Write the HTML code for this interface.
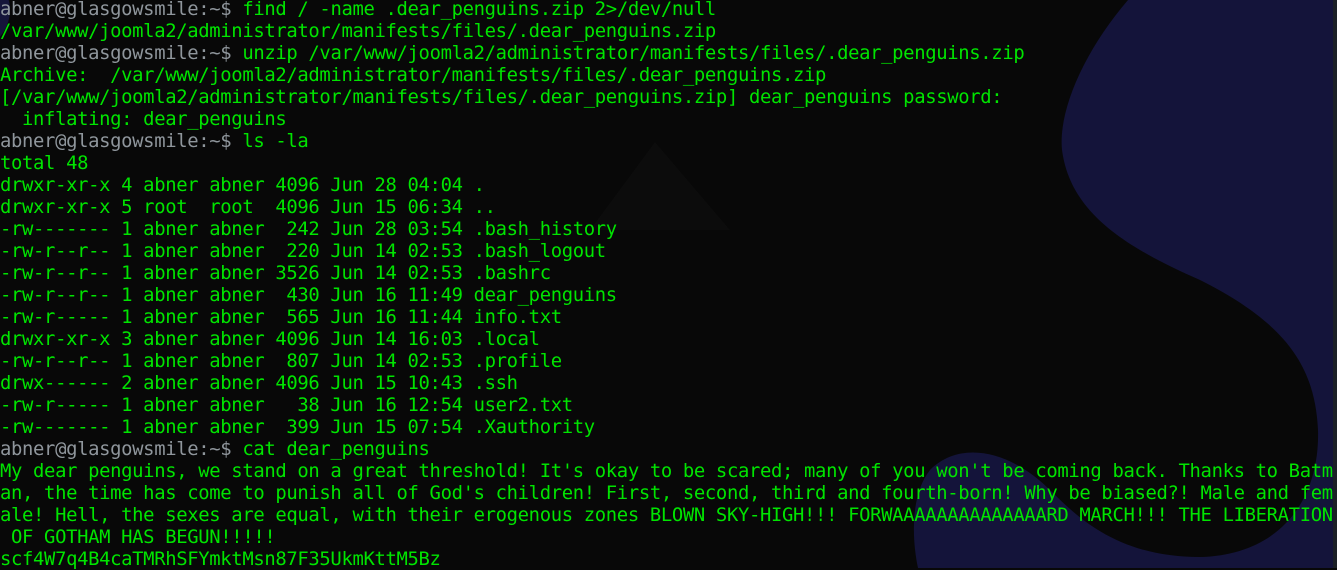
<!DOCTYPE html>
<html><head><meta charset="utf-8"><style>
html,body{margin:0;padding:0;width:1337px;height:568px;overflow:hidden;background:#080808}
svg{position:absolute;left:0;top:0}
pre{position:absolute;left:0;top:-2px;margin:0;font-family:"DejaVu Sans Mono","Liberation Mono",monospace;font-size:18.88px;line-height:22px;color:#00e400;white-space:pre;letter-spacing:-0.34px}
.p{color:#8f969c}
</style></head><body>
<svg width="1337" height="568">
<circle cx="-30" cy="10" r="40" fill="#15153a"/>
<path d="M1128,0 C1085,50 1058,110 1062,150 C1070,210 1120,245 1200,280 C1290,325 1315,370 1318,430 C1320,500 1280,555 1200,557 C1120,557 1080,520 1050,490 C1010,450 960,440 930,470 C910,495 912,540 918,568 L1333,568 L1333,0 Z" fill="#14143a"/>
<polygon points="590,230 655,142 730,230" fill="#0c0c0c"/>
<rect x="1333" y="0" width="4" height="568" fill="#1b2026"/>
</svg>
<pre><span class="p">abner@glasgowsmile:~$</span> find / -name .dear_penguins.zip 2&gt;/dev/null
/var/www/joomla2/administrator/manifests/files/.dear_penguins.zip
<span class="p">abner@glasgowsmile:~$</span> unzip /var/www/joomla2/administrator/manifests/files/.dear_penguins.zip
Archive:  /var/www/joomla2/administrator/manifests/files/.dear_penguins.zip
[/var/www/joomla2/administrator/manifests/files/.dear_penguins.zip] dear_penguins password: 
  inflating: dear_penguins           
<span class="p">abner@glasgowsmile:~$</span> ls -la
total 48
drwxr-xr-x 4 abner abner 4096 Jun 28 04:04 .
drwxr-xr-x 5 root  root  4096 Jun 15 06:34 ..
-rw------- 1 abner abner  242 Jun 28 03:54 .bash_history
-rw-r--r-- 1 abner abner  220 Jun 14 02:53 .bash_logout
-rw-r--r-- 1 abner abner 3526 Jun 14 02:53 .bashrc
-rw-r--r-- 1 abner abner  430 Jun 16 11:49 dear_penguins
-rw-r----- 1 abner abner  565 Jun 16 11:44 info.txt
drwxr-xr-x 3 abner abner 4096 Jun 14 16:03 .local
-rw-r--r-- 1 abner abner  807 Jun 14 02:53 .profile
drwx------ 2 abner abner 4096 Jun 15 10:43 .ssh
-rw-r----- 1 abner abner   38 Jun 16 12:54 user2.txt
-rw------- 1 abner abner  399 Jun 15 07:54 .Xauthority
<span class="p">abner@glasgowsmile:~$</span> cat dear_penguins
My dear penguins, we stand on a great threshold! It's okay to be scared; many of you won't be coming back. Thanks to Batm
an, the time has come to punish all of God's children! First, second, third and fourth-born! Why be biased?! Male and fem
ale! Hell, the sexes are equal, with their erogenous zones BLOWN SKY-HIGH!!! FORWAAAAAAAAAAAAAARD MARCH!!! THE LIBERATION
 OF GOTHAM HAS BEGUN!!!!!
scf4W7q4B4caTMRhSFYmktMsn87F35UkmKttM5Bz</pre>
</body></html>
